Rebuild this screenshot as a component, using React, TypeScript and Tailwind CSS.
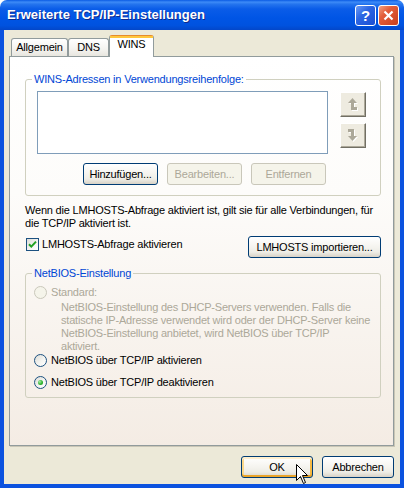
import React from 'react';

type BtnProps = {
  label: string;
  className?: string;
  disabled?: boolean;
  isDefault?: boolean;
};

function XpButton({ label, className = '', disabled = false, isDefault = false }: BtnProps) {
  const look = disabled
    ? 'border-[#C9C7BA] bg-[#F5F4EA] text-[#ACA899]'
    : 'border-[#003C74] bg-[linear-gradient(180deg,#FFFFFF_0%,#F7F6F2_40%,#EEEDE6_75%,#D8D2C6_100%)] text-black';
  const glow = isDefault
    ? ' shadow-[inset_0_2px_0_#FFF0CF,inset_0_-2px_0_#E9A42A,inset_2px_0_0_#FBD88A,inset_-2px_0_0_#F5B942]'
    : '';
  return (
    <button
      type="button"
      disabled={disabled}
      className={`h-[22px] rounded-[3px] border flex items-center justify-center text-[11px] leading-none ${look}${glow} ${className}`}
    >
      {label}
    </button>
  );
}

function Radio({ checked = false, disabled = false }: { checked?: boolean; disabled?: boolean }) {
  return (
    <span
      className={`w-[13px] h-[13px] rounded-full border flex items-center justify-center shrink-0 ${
        disabled
          ? 'border-[#CAC8BB] bg-[#F5F4EA]'
          : 'border-[#1C5180] bg-[linear-gradient(135deg,#DCDCD7_0%,#F6F6F3_60%,#FFFFFF_100%)]'
      }`}
    >
      {checked && (
        <span className="w-[5px] h-[5px] rounded-full bg-[radial-gradient(circle_at_35%_35%,#A8EBA8_0%,#2EB42E_55%,#1C8F1C_100%)]" />
      )}
    </span>
  );
}

function Checkbox() {
  return (
    <span className="w-[13px] h-[13px] border border-[#1C5180] bg-[linear-gradient(135deg,#DCDCD7_0%,#F6F6F3_60%,#FFFFFF_100%)] flex items-center justify-center shrink-0">
      <svg width="9" height="9" viewBox="0 0 9 9">
        <path d="M1 4.2 L3.3 6.6 L8 1.6" fill="none" stroke="#21A121" strokeWidth="2" />
      </svg>
    </span>
  );
}

// Pfeilform für Nach-oben / Nach-unten, grau mit weißem Versatz (deaktiviert)
function ArrowShape({ down }: { down: boolean }) {
  return down ? (
    <>
      <rect x="0" y="1" width="4" height="3" />
      <rect x="3" y="1" width="3" height="7" />
      <polygon points="0,8 4.5,13 9,8" />
    </>
  ) : (
    <>
      <polygon points="0,6 4.5,1 9,6" />
      <rect x="3" y="6" width="3" height="7" />
      <rect x="5" y="10" width="4" height="3" />
    </>
  );
}

function ArrowBtn({ down = false }: { down?: boolean }) {
  return (
    <div className="w-[26px] h-[25px] bg-[#EEEBE0] border border-t-white border-l-white border-r-[#716F64] border-b-[#716F64] shadow-[inset_-1px_-1px_0_#ACA899] flex items-center justify-center">
      <svg width="10" height="15" viewBox="0 0 10 15">
        <g fill="#FFFFFF" transform="translate(1,1)">
          <ArrowShape down={down} />
        </g>
        <g fill="#ACA899">
          <ArrowShape down={down} />
        </g>
      </svg>
    </div>
  );
}

export default function App() {
  return (
    <div className="relative w-[404px] h-[488px] flex flex-col font-['Liberation_Sans',Arial,sans-serif] text-[11px] text-black select-none">
      {/* Titelleiste */}
      <div className="h-[30px] shrink-0 flex items-center pl-[7px] pr-[5px] rounded-t-[7px] bg-[linear-gradient(180deg,#0A5BE4_0%,#3D8BF7_7%,#2474EE_14%,#0A5CE8_30%,#0055E5_60%,#0052DF_85%,#0347C9_100%)]">
        <span className="text-white font-bold text-[13px] [text-shadow:1px_1px_0_#0F2A8C]">
          Erweiterte TCP/IP-Einstellungen
        </span>
        <div className="ml-auto flex gap-[2px]">
          <div className="w-[21px] h-[21px] rounded-[3px] border border-white bg-[linear-gradient(135deg,#6B9BF5_0%,#2C66E3_40%,#1A4ED3_100%)] flex items-center justify-center text-white font-bold text-[15px] leading-none">
            ?
          </div>
          <div className="w-[21px] h-[21px] rounded-[3px] border border-white bg-[linear-gradient(135deg,#F2A283_0%,#E35E3A_35%,#C83F1E_100%)] flex items-center justify-center">
            <svg width="11" height="11" viewBox="0 0 11 11">
              <path d="M1.5 1.5 L9.5 9.5 M9.5 1.5 L1.5 9.5" stroke="#FFFFFF" strokeWidth="2.2" />
            </svg>
          </div>
        </div>
      </div>

      <div className="flex-1 flex flex-col bg-[#ECE9D8] border-x-[4px] border-b-[4px] border-[#0B52DF] tracking-[-0.2px]">
        {/* Reiter */}
        <div className="relative z-10 flex items-end h-[21px] mt-[5px] pl-[7px]">
          <div className="w-[57px] h-[18px] border border-b-0 border-[#919B9C] rounded-t-[3px] bg-[linear-gradient(180deg,#FFFFFF_0%,#F4F3EF_60%,#E8E6DF_100%)] pt-[2px] leading-[13px] text-center">
            Allgemein
          </div>
          <div className="w-[41px] h-[18px] border border-b-0 border-[#919B9C] rounded-t-[3px] bg-[linear-gradient(180deg,#FFFFFF_0%,#F4F3EF_60%,#E8E6DF_100%)] pt-[2px] leading-[13px] text-center">
            DNS
          </div>
          <div className="w-[45px] h-[22px] mb-[-1px] border-x border-t border-[#919B9C] border-t-[#E68B2C] rounded-t-[3px] bg-white flex flex-col">
            <div className="h-[2px] bg-[#FFC73C]" />
            <div className="leading-[13px] text-center">WINS</div>
          </div>
        </div>

        {/* Registerseite */}
        <div className="ml-[5px] w-[385px] h-[390px] shrink-0 border border-[#919B9C] shadow-[1px_1px_0_#C9C6B6] bg-[linear-gradient(180deg,#FFFFFF_0%,#FDFCFA_35%,#F4ECE4_100%)] pt-[16px] pl-[15px]">
          <fieldset className="w-[356px] border border-[#D0D0BF] rounded-[3px]">
            <legend className="ml-[6px] px-[2px] leading-[13px] text-[#0046D5]">
              WINS-Adressen in Verwendungsreihenfolge:
            </legend>
            <div className="pl-[11px] pb-[10px]">
              <div className="flex mt-[5px]">
                <div className="w-[291px] h-[63px] border border-[#7F9DB9] bg-white" />
                <div className="ml-[12px] mt-[1px] flex flex-col gap-[6px]">
                  <ArrowBtn />
                  <ArrowBtn down />
                </div>
              </div>
              <div className="flex gap-[9px] mt-[9px] ml-[46px]">
                <XpButton label="Hinzufügen..." className="w-[75px]" />
                <XpButton label="Bearbeiten..." className="w-[75px]" disabled />
                <XpButton label="Entfernen" className="w-[75px]" disabled />
              </div>
            </div>
          </fieldset>

          <p className="mt-[8px] leading-[13px] whitespace-nowrap">
            Wenn die LMHOSTS-Abfrage aktiviert ist, gilt sie für alle Verbindungen, für
            <br />
            die TCP/IP aktiviert ist.
          </p>

          <div className="w-[356px] mt-[6px] flex items-start justify-between">
            <div className="mt-[2px] ml-[1px] flex items-center h-[13px] gap-[3px]">
              <Checkbox />
              <span className="leading-[13px]">LMHOSTS-Abfrage aktivieren</span>
            </div>
            <XpButton label="LMHOSTS importieren..." className="w-[133px]" />
          </div>

          <fieldset className="w-[356px] mt-[9px] border border-[#D0D0BF] rounded-[3px]">
            <legend className="ml-[6px] px-[2px] leading-[13px] text-[#0046D5]">NetBIOS-Einstellung</legend>
            <div className="pl-[8px] pb-[8px]">
              <div className="mt-[6px] flex items-center h-[13px] gap-[4px]">
                <Radio disabled />
                <span className="leading-[13px] text-[#ACA899]">Standard:</span>
              </div>
              <p className="mt-[2px] pl-[27px] leading-[13px] text-[#ACA899] whitespace-nowrap">
                NetBIOS-Einstellung des DHCP-Servers verwenden. Falls die
                <br />
                statische IP-Adresse verwendet wird oder der DHCP-Server keine
                <br />
                NetBIOS-Einstellung anbietet, wird NetBIOS über TCP/IP
                <br />
                aktiviert.
              </p>
              <div className="mt-[1px] flex items-center h-[13px] gap-[4px]">
                <Radio />
                <span className="leading-[13px]">NetBIOS über TCP/IP aktivieren</span>
              </div>
              <div className="mt-[9px] flex items-center h-[13px] gap-[4px]">
                <Radio checked />
                <span className="leading-[13px]">NetBIOS über TCP/IP deaktivieren</span>
              </div>
            </div>
          </fieldset>
        </div>

        {/* Dialogschaltflächen */}
        <div className="flex justify-end gap-[9px] mt-[10px] pr-[6px]">
          <XpButton label="OK" className="w-[72px]" isDefault />
          <XpButton label="Abbrechen" className="w-[72px]" />
        </div>
      </div>

      {/* Mauszeiger */}
      <svg className="absolute left-[296px] top-[464px]" width="13" height="21" viewBox="0 0 13 21">
        <path
          d="M0.5 0.5 L0.5 16.5 L4.5 12.5 L7.5 19.5 L9.5 18.5 L6.5 11.5 L11.5 11.5 Z"
          fill="#FFFFFF"
          stroke="#000000"
          strokeWidth="1"
        />
      </svg>
    </div>
  );
}
